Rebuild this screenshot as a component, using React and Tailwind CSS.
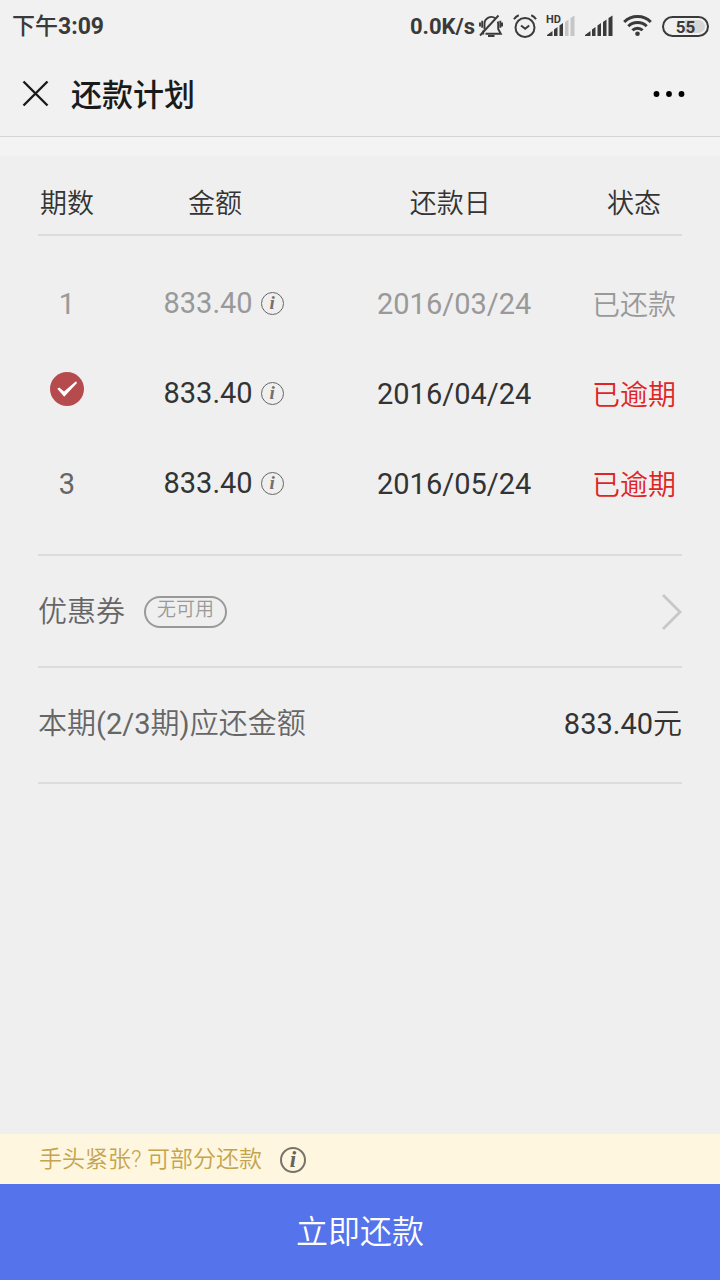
const installments = [
  { no: 1, amount: "833.40", date: "2016/03/24", status: "已还款", paid: true },
  { no: 2, amount: "833.40", date: "2016/04/24", status: "已逾期", current: true },
  { no: 3, amount: "833.40", date: "2016/05/24", status: "已逾期" },
];

const SignalBars = ({ weak }) => (
  <svg width="28" height="24" viewBox="0 0 28 24" className="overflow-visible" fill="#3a3a3a">
    <path d="M0 22v-1l5.500-4v5z" />
    <path d="M7 22v-6.500l3.500-2.500v9z" />
    <path d="M12.500 22V11.500l3.500-2.500v13z" />
    <path d="M18 22V8l3.500-2.500V22z" fill={weak ? "#c6c6c6" : "#3a3a3a"} />
    <path d="M23.500 22V4L27.500 1.500V22z" fill={weak ? "#c6c6c6" : "#3a3a3a"} />
    {weak && (
      <text x="-1" y="9" fontFamily="Roboto, sans-serif" fontSize="11" fontWeight="700">
        HD
      </text>
    )}
  </svg>
);

const StatusBar = () => (
  <div className="flex items-center justify-between h-[52px] pl-3 pr-[11px] text-[23px] leading-6 text-[#3a3a3a]">
    <span className="pt-[2px] font-medium">
      下午<span className="font-bold">3:09</span>
    </span>
    <div className="flex items-center gap-[10px]">
      <div className="flex items-center gap-1">
        <span className="pt-[2px] text-[22px] font-bold">0.0K/s</span>
        <svg width="24" height="24" viewBox="0 0 24 24" fill="none" stroke="#3a3a3a" strokeWidth="1.900">
          <path d="M5.500 15.500V9.500a6.700 6.700 0 0 1 11-5M18.700 7.500c.5 1 .5 2 .5 3v4.500l2.600 4.700H6.500M4.800 16.500l-1.600 3h2" />
          <path d="M19.500 1.500L1 21.500" />
          <path d="M9 22h6.500M1 8.500v4M3.200 6.800v7M21.300 6.800v7M23.200 8.500v4" />
        </svg>
      </div>
      <svg width="24" height="24" viewBox="0 0 24 24" fill="none" stroke="#3a3a3a" strokeWidth="2">
        <circle cx="12" cy="13.500" r="9.500" />
        <path d="M8 11.500l4.200 3.300 4-3.300M1 5.300C2 3.500 3.500 2 5.800 1.200M23 5.300c-1-1.800-2.500-3.300-4.800-4.100" />
      </svg>
      <SignalBars weak />
      <SignalBars />
      <svg width="29" height="24" viewBox="0 0 29 24" fill="none" stroke="#3a3a3a" strokeWidth="3">
        <path d="M1.200 8C8.500 .7 20.500 .7 27.800 8" />
        <path d="M5.300 12.300c5-5 13.400-5 18.400 0" />
        <path d="M9.400 16.300c2.800-2.800 7.400-2.800 10.200 0" />
        <circle cx="14.500" cy="19.700" r="2.300" fill="#3a3a3a" stroke="none" />
      </svg>
      <div className="flex items-center justify-center w-[47px] h-[21px] p-[2px] border-2 border-[#3a3a3a] rounded-full">
        <span className="w-full h-full rounded-full bg-linear-to-r from-transparent from-50% to-[#d6d6d6] to-50% text-center text-[17px] leading-[14px] font-bold">
          55
        </span>
      </div>
    </div>
  </div>
);

const NavBar = () => (
  <header className="flex items-center h-[85px] pl-[22px] pr-[34px] border-b border-[#d5d5d5]">
    <button type="button" aria-label="关闭" className="pb-[2px]">
      <svg width="27" height="27" viewBox="0 0 27 27" stroke="#1a1a1a" strokeWidth="2.400">
        <path d="M1.500 1.500l24 24M25.500 1.500l-24 24" />
      </svg>
    </button>
    <h1 className="pt-[3px] ml-[22px] text-[31px] leading-9 font-medium text-[#1a1a1a]">还款计划</h1>
    <button type="button" aria-label="更多" className="ml-auto">
      <svg width="33" height="8" viewBox="0 0 33 8">
        <circle cx="3.500" cy="4" r="2.900" />
        <circle cx="16" cy="4" r="2.900" />
        <circle cx="28.500" cy="4" r="2.900" />
      </svg>
    </button>
  </header>
);

const InfoButton = ({ large }) => (
  <button
    type="button"
    aria-label="说明"
    className={`flex items-center justify-center shrink-0 rounded-full font-[Liberation_Serif,serif] font-bold italic ${
      large
        ? "size-[26px] border-2 border-[#77736a] text-[23px] leading-5 text-[#66625c]"
        : "size-[23px] border border-[#666] text-[19px] leading-4 text-[#707070]"
    }`}
  >
    i
  </button>
);

const InstallmentTable = () => (
  <table className="w-full table-fixed text-center text-[29px] leading-9">
    <thead>
      <tr className="h-[79px] border-b-2 border-[#dcdcdc] text-[27px] text-[#333]">
        <th className="w-[9%] pt-[18px] font-[350] whitespace-nowrap">期数</th>
        <th className="w-[37%] pt-[18px] font-[350]">金额</th>
        <th className="w-[36%] pt-[18px] font-[350]">还款日</th>
        <th className="w-[18%] pt-[18px] pl-5 font-[350]">状态</th>
      </tr>
    </thead>
    <tbody className="before:block before:h-[22px] after:block after:h-[26px]">
      {installments.map((item) => (
        <tr key={item.no} className={`h-[90px] ${item.paid ? "text-[#999]" : "text-[#333]"}`}>
          <td className={item.paid ? "pt-[2px]" : "pt-[2px] text-[#666]"}>
            {item.current ? (
              <svg width="34" height="34" viewBox="0 0 34 34" className="mx-auto mb-[10px]" role="img" aria-label="本期">
                <circle cx="17" cy="17" r="17" fill="#b54b4d" />
                <path d="M7.300 16.800l1.900-1.300 4.800 4L26 9.200l1 1.800L14.200 24.800z" fill="#fff" />
              </svg>
            ) : (
              item.no
            )}
          </td>
          <td>
            <div className="flex items-center justify-center gap-2 pl-[17px]">
              {item.amount}
              <InfoButton />
            </div>
          </td>
          <td className="pt-[2px] pl-2">{item.date}</td>
          <td className={`pt-[5px] pl-5 text-[28px] font-[350] ${item.paid ? "" : "text-[#e02426]"}`}>
            {item.status}
          </td>
        </tr>
      ))}
    </tbody>
  </table>
);

const App = () => {
  return (
    <div className="flex flex-col min-h-screen bg-[#efefef] font-[Roboto,Noto_Sans_CJK_SC,sans-serif]">
      <div className="bg-[#f1f1f1]">
        <StatusBar />
        <NavBar />
      </div>
      <div className="h-[19px] bg-[#f3f3f3]" />

      <main className="grow px-[38px] text-[29px] leading-9">
        <InstallmentTable />
        <button
          type="button"
          className="flex items-center w-full h-[114px] pt-[2px] border-y-2 border-[#dcdcdc] text-[#666]"
        >
          <span className="font-[350]">优惠券</span>
          <span className="ml-[19px] px-[11px] h-8 border-2 border-[#999] rounded-full text-[19px] leading-6 font-[350] text-[#999]">
            无可用
          </span>
          <svg width="21" height="38" viewBox="0 0 21 38" className="ml-auto" fill="none" stroke="#c7c7c7" strokeWidth="2.800">
            <path d="M2 2l17 17L2 36" />
          </svg>
        </button>
        <div className="flex items-center justify-between h-[116px] pb-[2px] border-b-2 border-[#dcdcdc]">
          <span className="font-[350] text-[#666]">
            本期<span className="font-normal">(2/3</span>期
            <span className="font-normal">)</span>应还金额
          </span>
          <span className="text-[#333]">
            833.40<span className="font-[350]">元</span>
          </span>
        </div>
      </main>

      <footer>
        <div className="flex items-center gap-[18px] h-[50px] pt-[2px] px-[39px] bg-[#fff6df] text-[23px] leading-7 font-[350] text-[#c4a44f]">
          手头紧张? 可部分还款
          <InfoButton large />
        </div>
        <button type="button" className="block w-full h-24 bg-[#5573ea] text-[32px] leading-10 font-[350] text-white">
          立即还款
        </button>
      </footer>
    </div>
  );
};

export default App;
